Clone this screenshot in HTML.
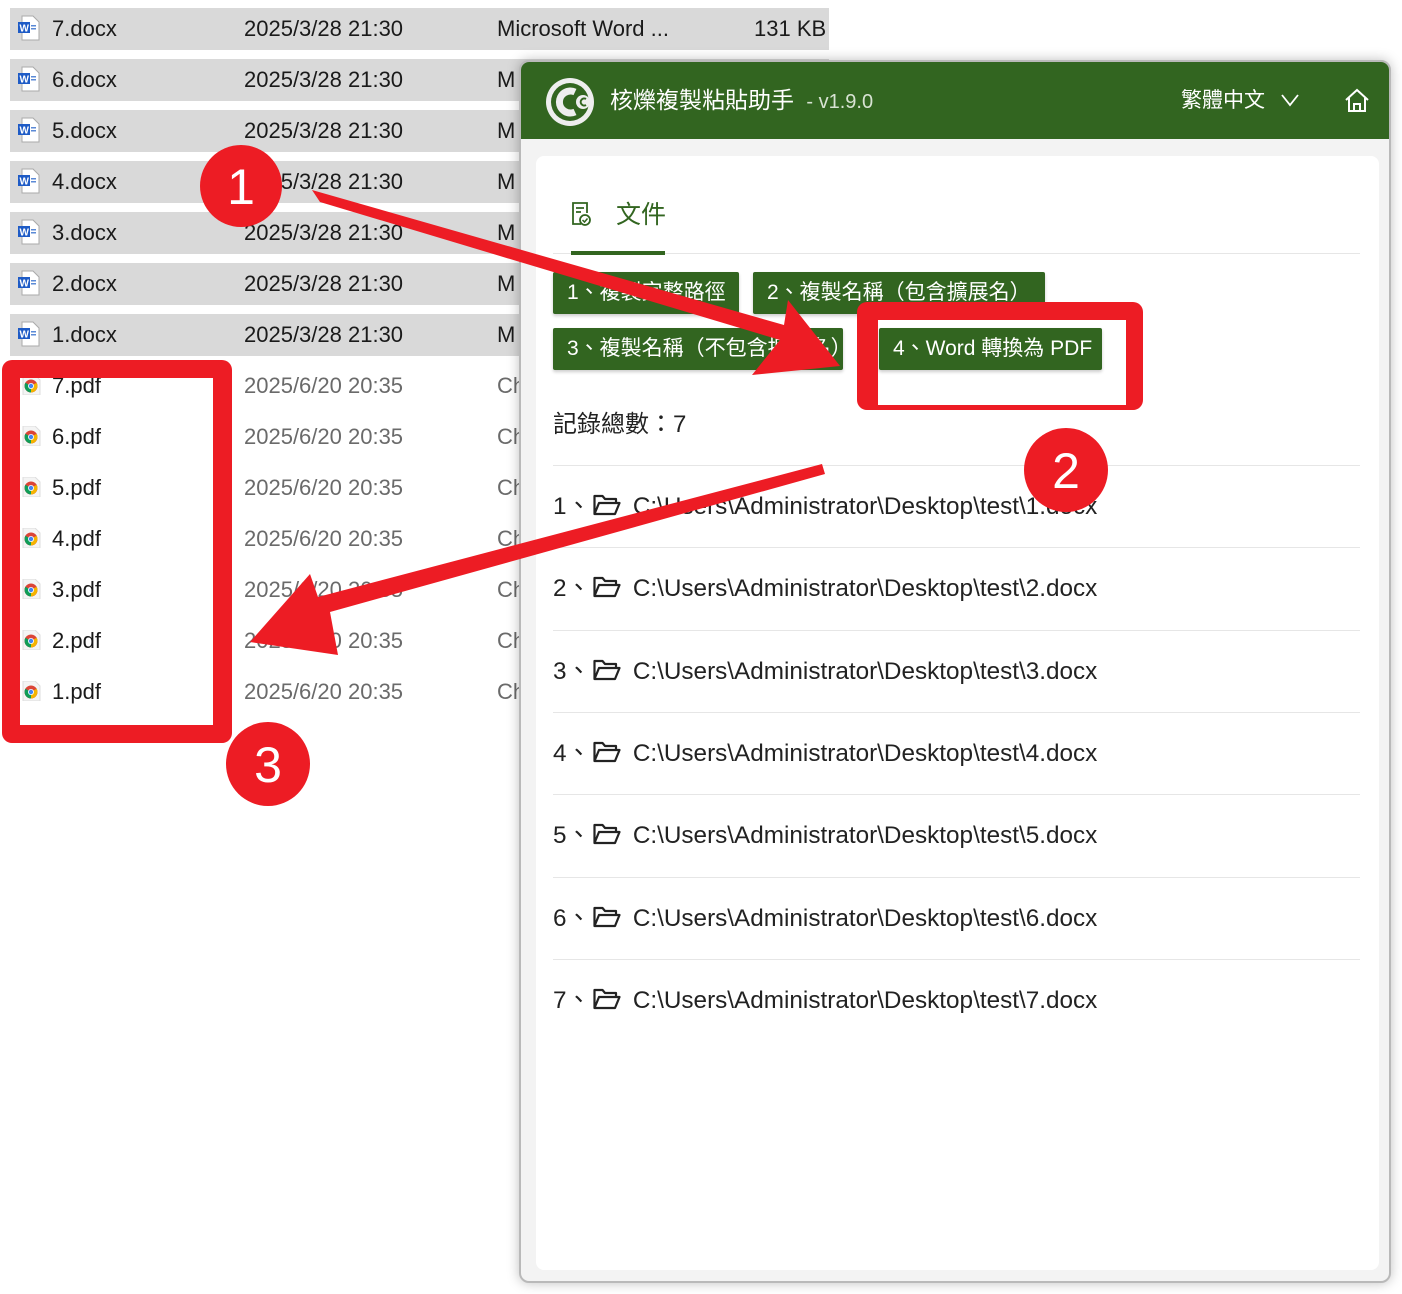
<!DOCTYPE html>
<html><head><meta charset="utf-8">
<style>
*{margin:0;padding:0;box-sizing:border-box}
body{width:1402px;height:1294px;background:#fff;position:relative;overflow:hidden;font-family:"Liberation Sans","Noto Sans CJK TC",sans-serif}
.row{position:absolute;left:10px;height:42px;background:#d9d9d9;width:819px}
.t{position:absolute;font-size:22px;line-height:30px;color:#1a1a1a;white-space:nowrap}
.g{color:#6a6a6a}
.wi{position:absolute;left:18px;width:22px;height:26px}
.ci{position:absolute;left:21px;width:20px;height:20px}
#panel{position:absolute;left:519px;top:60px;width:872px;height:1223px;background:#f3f3f3;border:2px solid #b9b9b9;border-radius:10px;overflow:hidden;box-shadow:0 0 12px rgba(0,0,0,.25)}
#hdr{position:absolute;left:0;top:0;width:100%;height:77px;background:#326520}
#card{position:absolute;left:15px;top:94px;width:843px;height:1114px;background:#fff;border-radius:8px}
.btn{position:absolute;height:42px;background:#326520;color:#fff;font-size:21px;line-height:42px;padding-left:14px;border-radius:2px;white-space:nowrap;overflow:hidden;box-shadow:0 2px 3px rgba(0,0,0,.2)}
.li{position:absolute;left:17px;width:807px;font-size:24.3px;color:#222;white-space:nowrap;line-height:34px}
.div{position:absolute;left:17px;width:807px;height:1px;background:#e6e6e6}
</style></head><body>

<div class="row" style="top:8px"></div>
<div class="row" style="top:59px"></div>
<div class="row" style="top:110px"></div>
<div class="row" style="top:161px"></div>
<div class="row" style="top:212px"></div>
<div class="row" style="top:263px"></div>
<div class="row" style="top:314px"></div>

<svg width="0" height="0" style="position:absolute">
<defs>
<g id="w"><path d="M4 1h11l6 6v18H4z" fill="#fff" stroke="#aaa"/><rect x="0" y="7" width="12" height="11" fill="#1e5bc6"/><text x="1.5" y="16.5" font-size="10" font-weight="bold" fill="#fff" font-family="Liberation Sans">W</text><rect x="13" y="10" width="5" height="1.5" fill="#5b8ad6"/><rect x="13" y="13" width="5" height="1.5" fill="#5b8ad6"/></g>
<g id="c"><path d="M2 0h12l5 5v15H2z" fill="#f4f4f4" stroke="#ddd"/><circle cx="10" cy="11" r="6.5" fill="#db4437"/><path d="M10 11L4.4 7.8A6.5 6.5 0 0 0 10 17.5z" fill="#0f9d58"/><path d="M10 11v6.5A6.5 6.5 0 0 0 15.6 7.8z" fill="#f4b400"/><circle cx="10" cy="11" r="3" fill="#fff"/><circle cx="10" cy="11" r="2.2" fill="#4285f4"/></g>
</defs></svg>

<div id="files"></div>
<script>
var h='';
for(var i=0;i<7;i++){var y=8+i*51;
h+='<svg class="wi" style="top:'+(y+7)+'px" viewBox="0 0 22 26"><use href="#w"/></svg>';
h+='<div class="t" style="left:52px;top:'+(y+6)+'px">'+(7-i)+'.docx</div>';
h+='<div class="t" style="left:244px;top:'+(y+6)+'px">2025/3/28 21:30</div>';
h+='<div class="t" style="left:497px;top:'+(y+6)+'px">'+(i==0?'Microsoft Word ...':'M')+'</div>';}
h+='<div class="t" style="left:754px;top:14px">131 KB</div>';
for(var i=0;i<7;i++){var y=365+i*51;
h+='<svg class="ci" style="top:'+(y+10)+'px" viewBox="0 0 20 20"><use href="#c"/></svg>';
h+='<div class="t" style="left:52px;top:'+(y+6)+'px">'+(7-i)+'.pdf</div>';
h+='<div class="t g" style="left:244px;top:'+(y+6)+'px">2025/6/20 20:35</div>';
h+='<div class="t g" style="left:497px;top:'+(y+6)+'px">Ch</div>';}
document.getElementById('files').innerHTML=h;
</script>

<div id="panel">
 <div id="hdr">
  <svg style="position:absolute;left:24px;top:15px" width="50" height="50" viewBox="0 0 50 50">
   <circle cx="25" cy="25" r="24" fill="#eee"/><circle cx="25" cy="25" r="19" fill="#326520"/>
   <path d="M30 15A11 11 0 1 0 30 35" stroke="#eee" stroke-width="7" fill="none"/>
   <circle cx="38" cy="25" r="7" fill="#eee"/><path d="M41 22A3.5 3.5 0 1 0 41 28" stroke="#326520" stroke-width="2" fill="none"/>
  </svg>
  <div style="position:absolute;left:89px;top:23px;color:#fff;font-size:23px;line-height:30px">核爍複製粘貼助手 <span style="font-size:20px;color:#d8e3d3;margin-left:6px">- v1.9.0</span></div>
  <div style="position:absolute;left:660px;top:24px;color:#fff;font-size:21px;line-height:30px">繁體中文</div>
  <svg style="position:absolute;left:760px;top:31px" width="18" height="14"><path d="M1 2l8 10 8-10" stroke="#fff" stroke-width="1.8" fill="none"/></svg>
  <svg style="position:absolute;left:822px;top:25px" width="28" height="28" viewBox="0 0 28 28"><path d="M3 13L14 3l11 10M6 11v13h16V11M11 24v-7h6v7" stroke="#fff" stroke-width="2" fill="none"/></svg>
 </div>
 <div id="card">
  <svg style="position:absolute;left:35px;top:45px" width="22" height="26" viewBox="0 0 22 26"><path d="M10 23H2V2h14v10" stroke="#326520" stroke-width="1.8" fill="none"/><path d="M5 7h8M5 11h5" stroke="#326520" stroke-width="1.8"/><circle cx="14" cy="19" r="5" stroke="#326520" stroke-width="1.8" fill="#fff"/><path d="M11.5 19l2 2 3-3.5" stroke="#326520" stroke-width="1.5" fill="none"/></svg>
  <div style="position:absolute;left:80px;top:42px;font-size:25px;color:#326520;line-height:34px">文件</div>
  <div style="position:absolute;left:17px;top:97px;width:807px;height:1px;background:#e6e6e6"></div>
  <div style="position:absolute;left:35px;top:95px;width:94px;height:4px;background:#326520"></div>
  <div class="btn" style="left:17px;top:116px;width:186px">1、複製完整路徑</div>
  <div class="btn" style="left:217px;top:116px;width:292px">2、複製名稱（包含擴展名）</div>
  <div class="btn" style="left:17px;top:172px;width:290px">3、複製名稱（不包含擴展名）</div>
  <div class="btn" style="left:343px;top:172px;width:223px">4、Word 轉換為 PDF</div>
  <div style="position:absolute;left:17px;top:252px;font-size:24px;color:#222;line-height:34px">記錄總數：7</div>
  <div id="list"></div>
 </div>
</div>
<script>
var l='';var F='<svg width="28" height="22" viewBox="0 0 28 22" style="vertical-align:-2px;margin:0 12px 0 2px"><path d="M1.5 20V2h8l2.5 3h11v4M1.5 20L6 9h20.5l-4.5 11z" stroke="#222" stroke-width="2.2" fill="none" stroke-linejoin="round"/></svg>';
for(var i=0;i<7;i++){var y=309+i*82.3;
l+='<div class="div" style="top:'+Math.round(y)+'px"></div>';
l+='<div class="li" style="top:'+Math.round(y+25)+'px">'+(i+1)+'、'+F+'C:\\Users\\Administrator\\Desktop\\test\\'+(i+1)+'.docx</div>';}
document.getElementById('list').innerHTML=l;
</script>

<svg style="position:absolute;left:0;top:0" width="1402" height="1294">
 <g fill="#ed1c24">
  <path fill-rule="evenodd" d="M12 360h210a10 10 0 0 1 10 10v363a10 10 0 0 1-10 10H12a10 10 0 0 1-10-10V370a10 10 0 0 1 10-10zM20 378v347h193V378z"/>
  <path fill-rule="evenodd" d="M867 302h266a10 10 0 0 1 10 10v88a10 10 0 0 1-10 10H867a10 10 0 0 1-10-10v-88a10 10 0 0 1 10-10zM878 320v85h248v-85z"/>
  <polygon points="312,190 320,202 780,340 752,375 840,366 788,300 784,325"/>
  <polygon points="822,464 825,474 330,612 338,655 250,642 310,574 318,597"/>
  <circle cx="241" cy="186" r="41"/>
  <circle cx="1066" cy="470" r="42"/>
  <circle cx="268" cy="764" r="42"/>
 </g>
 <g fill="#fff" font-family="Liberation Sans" font-size="50" text-anchor="middle">
  <text x="241" y="204">1</text><text x="1066" y="488">2</text><text x="268" y="782">3</text>
 </g>
</svg>
</body></html>
